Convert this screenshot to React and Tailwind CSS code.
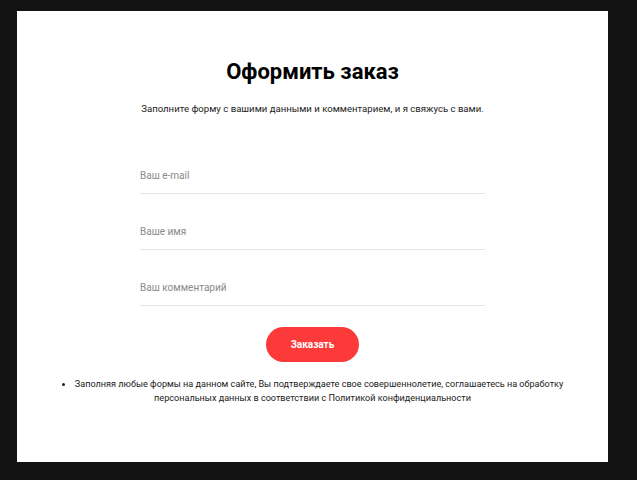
const Field = ({ placeholder }) => (
  <div className="border-b border-[#e5e5e5] pb-[10px]">
    <input
      className="block w-full h-[14px] p-0 bg-transparent text-[10px] leading-[14px] text-[#333] placeholder:text-[#8a8a8a] outline-none"
      placeholder={placeholder}
      type="text"
    />
  </div>
);

export default function App() {
  return (
    <div className="w-[637px] h-[480px] bg-[#131313] pt-[11px] pl-[17px] font-['Roboto',sans-serif]">
      <div className="w-[591px] h-[451px] bg-white flex flex-col items-center">
        {/* title */}
        <h1 className="mt-[46px] text-[22px] leading-[30px] font-bold text-black">
          Оформить заказ
        </h1>
        <p className="mt-[15px] text-[9.6px] leading-[14px] text-[#222]">
          Заполните форму с вашими данными и комментарием, и я свяжусь с вами.
        </p>
        {/* form */}
        <form className="w-[345px] mt-[53px] flex flex-col gap-[31px]">
          <Field placeholder="Ваш e-mail" />
          <Field placeholder="Ваше имя" />
          <Field placeholder="Ваш комментарий" />
        </form>
        <button
          type="button"
          className="mt-[21px] w-[93px] h-[35px] rounded-full bg-[#fd3a3a] text-white text-[10px] font-bold"
        >
          Заказать
        </button>
        {/* policy */}
        <ul className="mt-[15px] w-[520px] text-center text-[9.1px] leading-[14px] text-[#222]">
          <li className="list-disc list-inside">
            Заполняя любые формы на данном сайте, Вы подтверждаете свое совершеннолетие, соглашаетесь на обработку персональных данных в соответствии с Политикой конфиденциальности
          </li>
        </ul>
      </div>
    </div>
  );
}
